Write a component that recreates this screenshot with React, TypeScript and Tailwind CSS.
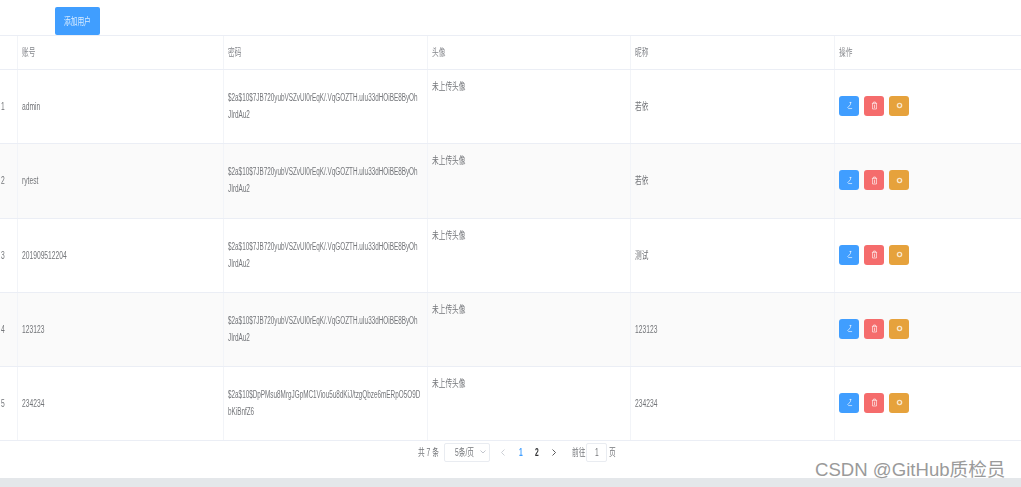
const FONT = "font-['Liberation_Sans','Noto_Sans_CJK_SC',sans-serif]";

const rows = [
  { id: 1, account: "admin", pwd: ["$2a$10$7JB720yubVSZvUI0rEqK/.VqGOZTH.uIu33dHOiBE8ByOh", "JIrdAu2"], nick: "若依", h: "h-[74px]" },
  { id: 2, account: "rytest", pwd: ["$2a$10$7JB720yubVSZvUI0rEqK/.VqGOZTH.uIu33dHOiBE8ByOh", "JIrdAu2"], nick: "若依", h: "h-[75px]" },
  { id: 3, account: "201909512204", pwd: ["$2a$10$7JB720yubVSZvUI0rEqK/.VqGOZTH.uIu33dHOiBE8ByOh", "JIrdAu2"], nick: "测试", h: "h-[74px]" },
  { id: 4, account: "123123", pwd: ["$2a$10$7JB720yubVSZvUI0rEqK/.VqGOZTH.uIu33dHOiBE8ByOh", "JIrdAu2"], nick: "123123", h: "h-[74px]" },
  { id: 5, account: "234234", pwd: ["$2a$10$DpPMsu8MrgJGpMC1Viou5u8dKiJ/tzgQbze6mERpO5O9D", "bKiBnfZ6"], nick: "234234", h: "h-[74px]" },
];

function T({ children, className = "" }: { children: React.ReactNode; className?: string }) {
  return <span className={`inline-block origin-left scale-x-[.67] whitespace-nowrap blur-[0.3px] ${className}`}>{children}</span>;
}

function ActionButton({ color, children }: { color: string; children: React.ReactNode }) {
  return (
    <button className={`flex h-[20px] w-[20px] items-center justify-center rounded-[3px] ${color}`}>
      <svg className="blur-[0.3px]" width="7" height="9" viewBox="0 0 8 10" fill="none" stroke="#ffffff" strokeOpacity="0.72" strokeWidth="1">
        {children}
      </svg>
    </button>
  );
}

function Row({ r }: { r: (typeof rows)[number] }) {
  const even = r.id % 2 === 0;
  return (
    <div
      className={`grid grid-cols-[18px_206px_204px_203px_204px_1fr] border-b border-[#ebeef5] ${r.h} ${even ? "bg-[#fafafa]" : "bg-white"}`}
    >
      <div className="flex items-center border-r border-[#f2f4f8] pb-[1px] pl-[1px]"><T>{r.id}</T></div>
      <div className="flex items-center border-r border-[#f2f4f8] pb-[1px] pl-[4px]"><T>{r.account}</T></div>
      <div className="flex flex-col items-start justify-center border-r border-[#f2f4f8] pb-[2px] pl-[4px] leading-[17px]">
        <T className="!scale-x-[.635]">{r.pwd[0]}</T>
        <T className="!scale-x-[.635]">{r.pwd[1]}</T>
      </div>
      <div className="border-r border-[#f2f4f8] pl-[4px] pt-[8px] leading-[17px]"><T>未上传头像</T></div>
      <div className="flex items-center border-r border-[#f2f4f8] pb-[1px] pl-[4px]"><T>{r.nick}</T></div>
      <div className="flex items-center gap-[5px] pb-[2px] pl-[4px]">
        <ActionButton color="bg-[#409eff]">
          <path d="M5.5 1 L5 4 L2 7.5 L3 8.5 H7 M4 1.5 H6" />
        </ActionButton>
        <ActionButton color="bg-[#f56c6c]">
          <path d="M1 2.5 H7 M3 2.5 V1 H5 V2.5 M1.8 2.5 V9 H6.2 V2.5 M4 4 V8" />
        </ActionButton>
        <ActionButton color="bg-[#e6a23c]">
          <circle cx="4" cy="5" r="2.4" strokeWidth="1.6" />
        </ActionButton>
      </div>
    </div>
  );
}

export default function App() {
  return (
    <div className={`relative flex h-[487px] w-[1021px] flex-col overflow-hidden bg-white text-[10px] text-[#737579] ${FONT}`}>
      <div className="h-[35px] pl-[55px] pt-[7px]">
        <button className="flex h-[28px] w-[45px] items-center rounded-[2px] bg-[#409eff] pl-[9px] text-[10px] text-[#d9ecff]">
          <T>添加用户</T>
        </button>
      </div>

      <div className="grid h-[35px] grid-cols-[18px_206px_204px_203px_204px_1fr] border-y border-[#ebeef5] text-[#85878c]">
        <div className="border-r border-[#f2f4f8]" />
        <div className="flex items-center border-r border-[#f2f4f8] pl-[4px]"><T>账号</T></div>
        <div className="flex items-center border-r border-[#f2f4f8] pl-[4px]"><T>密码</T></div>
        <div className="flex items-center border-r border-[#f2f4f8] pl-[4px]"><T>头像</T></div>
        <div className="flex items-center border-r border-[#f2f4f8] pl-[4px]"><T>昵称</T></div>
        <div className="flex items-center pl-[4px]"><T>操作</T></div>
      </div>

      {rows.map((r) => (
        <Row key={r.id} r={r} />
      ))}

      <div className="flex h-[23px] items-center pl-[418px]">
        <div className="w-[26px]"><T>共 7 条</T></div>
        <div className="relative flex h-[19px] w-[46px] items-center rounded-[2px] border border-[#e9ecf1] pl-[10px]">
          <T>5条/页</T>
          <svg className="absolute right-[3px] top-[6px]" width="6" height="4" viewBox="0 0 6 4" fill="none" stroke="#b4b8c0" strokeWidth="0.8">
            <path d="M0.5 0.5 L3 3 L5.5 0.5" />
          </svg>
        </div>
        <svg className="ml-[11px]" width="4" height="7" viewBox="0 0 4 7" fill="none" stroke="#c0c4cc" strokeWidth="0.8">
          <path d="M3.5 0.5 L0.5 3.5 L3.5 6.5" />
        </svg>
        <span className="ml-[14px] w-[16px]"><T className="font-bold text-[#409eff]">1</T></span>
        <span className="w-[17px]"><T className="font-bold text-[#303133]">2</T></span>
        <svg width="4" height="7" viewBox="0 0 4 7" fill="none" stroke="#303133" strokeWidth="0.8">
          <path d="M0.5 0.5 L3.5 3.5 L0.5 6.5" />
        </svg>
        <span className="ml-[16px] w-[14px]"><T>前往</T></span>
        <div className="flex h-[19px] w-[21px] items-center rounded-[2px] border border-[#e9ecf1] pl-[8px]"><T>1</T></div>
        <span className="ml-[2px]"><T>页</T></span>
      </div>

      <div className="flex-1" />
      <div className="h-[9px] bg-[#e4e7ea]" />

      <div className="absolute left-[815px] top-[459px] text-[18.6px] leading-[22px] whitespace-nowrap text-[#9a9a9a] [text-shadow:0_0_1px_#ffffff]">
        CSDN @GitHub质检员
      </div>
    </div>
  );
}
